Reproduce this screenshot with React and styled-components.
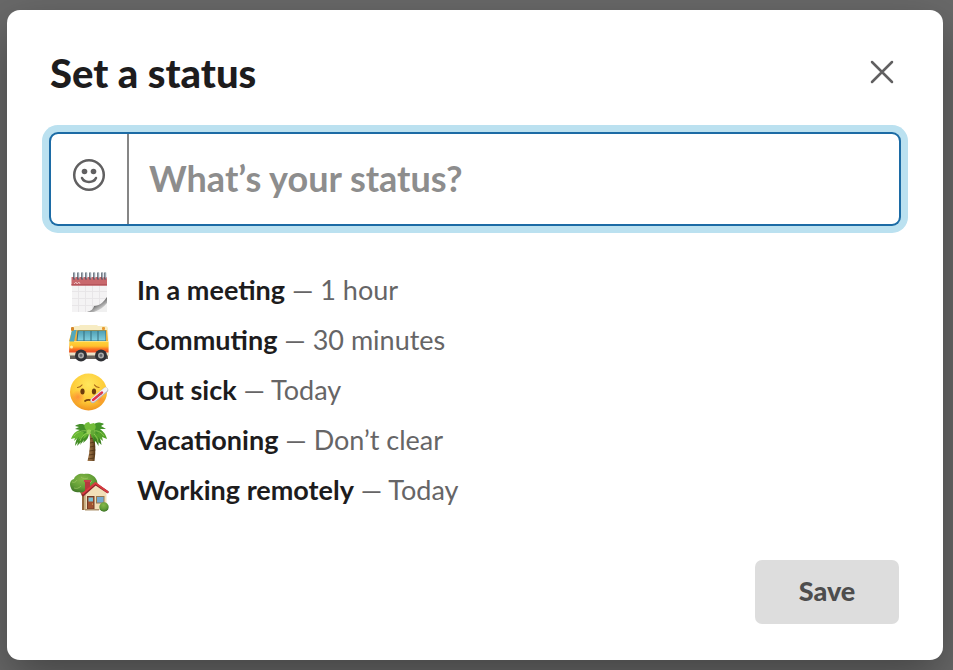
import { useState } from 'react'
import styled, { createGlobalStyle } from 'styled-components'

const GlobalStyle = createGlobalStyle`
  * { box-sizing: border-box; }

  body {
    margin: 0;
    font-family: Lato, 'Liberation Sans', sans-serif;
    color: #1d1c1d;
  }
`

const Overlay = styled.div`
  min-height: 100vh;
  padding: 10px 10px 10px 7px;
  background: #696969;
  overflow: hidden;
`

const Modal = styled.form`
  padding: 39px 44px 36px 43px;
  background: #fff;
  border-radius: 13px;
  box-shadow: 0 18px 48px rgba(0, 0, 0, 0.35);
`

const Header = styled.header`
  display: flex;
  justify-content: space-between;
  align-items: flex-start;
  margin-bottom: 37px;
`

const Title = styled.h1`
  margin: 0;
  font-size: 40px;
  line-height: 48px;
  font-weight: 900;
`

const CloseButton = styled.button`
  display: flex;
  padding: 8px 4px;
  border: none;
  background: none;
  color: #616061;
  cursor: pointer;
`

const StatusField = styled.div`
  display: flex;
  height: 90px;
  margin-left: 1px;
  border-radius: 7px;
  box-shadow: 0 0 0 2px #1c6ba5, 0 0 0 9px #bbe1f0;
`

const EmojiButton = styled.button`
  display: flex;
  align-items: center;
  justify-content: center;
  width: 78px;
  padding: 0 0 8px;
  border: none;
  border-right: 2px solid #868686;
  background: none;
  color: #616061;
  cursor: pointer;
`

const StatusInput = styled.input`
  flex: 1;
  min-width: 0;
  padding: 0 20px 2px;
  border: none;
  outline: none;
  background: none;
  color: inherit;
  font-family: inherit;
  font-size: 36px;
  font-weight: 700;

  &::placeholder {
    color: #8d8d8d;
    opacity: 1;
  }
`

const PresetList = styled.ul`
  margin: 0;
  padding: 43px 0 0 1px;
  list-style: none;
`

const Preset = styled.button`
  display: flex;
  align-items: center;
  gap: 28px;
  width: 100%;
  height: 50px;
  padding: 0 18px;
  border: none;
  background: none;
  color: #666566;
  font-family: inherit;
  font-size: 27px;
  line-height: 32px;
  text-align: left;
  cursor: pointer;

  svg {
    flex: none;
    overflow: visible;
  }
`

const PresetText = styled.span`
  padding-bottom: 4px;
`

const PresetName = styled.b`
  color: #1d1c1d;
  font-weight: 700;
`

const Footer = styled.footer`
  display: flex;
  justify-content: flex-end;
  margin-top: 43px;
`

const SaveButton = styled.button`
  width: 144px;
  height: 64px;
  padding: 0 0 4px;
  border: none;
  border-radius: 7px;
  background: #ddd;
  color: #4d4d4d;
  font-family: inherit;
  font-size: 27px;
  font-weight: 900;
`

const CloseIcon = () => (
  <svg width="26" height="30" viewBox="0 0 26 30" fill="none" stroke="currentColor" strokeWidth="2.5" strokeLinecap="round">
    <path d="M3 5l20 20M23 5L3 25" />
  </svg>
)

const SmileIcon = () => (
  <svg width="34" height="34" viewBox="0 0 34 34" fill="none" stroke="currentColor" strokeWidth="2.5" strokeLinecap="round">
    <circle cx="17" cy="17" r="14.8" />
    <path d="M10 20c2.2 5.2 11.8 5.2 14 0" />
    <circle cx="12.5" cy="13.5" r="2.8" fill="currentColor" stroke="none" />
    <circle cx="21.5" cy="13.5" r="2.8" fill="currentColor" stroke="none" />
  </svg>
)

const CalendarIcon = () => (
  <svg width="40" height="40" viewBox="0 0 40 40" aria-hidden="true">
    <defs>
      <linearGradient id="curl" x1="0.2" y1="0.2" x2="0.8" y2="0.9">
        <stop offset="0" stopColor="#e4e4e4" />
        <stop offset="0.3" stopColor="#444" />
        <stop offset="0.6" stopColor="#999" />
        <stop offset="1" stopColor="#f2f2f2" />
      </linearGradient>
    </defs>
    <path d="M3 12h35v28H3z" fill="#f4f3f4" />
    <path d="M3 19.5h35M3 26.5h35M3 33.5h35M9.5 13v27M16.5 13v27M23.5 13v27M30.5 13v27" stroke="#e6e4e6" strokeWidth="0.9" />
    <path d="M2.5 5H38v8.500H2.500z" fill="#c9686d" />
    <path d="M2.500 12H38v1.500H2.500z" fill="#b6545b" />
    <path d="M5 12l2-2 1 2 2-2 1 2" stroke="#e9b9bb" fill="none" />
    <path d="M18 40c4-1 6-2.500 7-6 6-.5 9-3 13-9V40z" fill="url(#curl)" />
    <path d="M25 40c6-2 10-5 13-9v9z" fill="#f0f0f0" />
    {[5, 9, 13, 17, 21, 25, 29, 33, 36].map((x) => (
      <g key={x} strokeLinecap="round">
        <path d={`M${x} 1v6`} stroke="#485360" strokeWidth="1.5" />
        <path d={`M${x + 1} 1v5`} stroke="#c9d5df" strokeWidth="1" />
      </g>
    ))}
  </svg>
)

const BusIcon = () => (
  <svg width="40" height="40" viewBox="0 0 40 40" aria-hidden="true">
    <defs>
      <linearGradient id="busBody" x1="0" y1="0" x2="0" y2="1">
        <stop offset="0" stopColor="#ffd43b" />
        <stop offset="0.3" stopColor="#ffc02e" />
        <stop offset="0.5" stopColor="#fa6e23" />
        <stop offset="0.68" stopColor="#e94b25" />
        <stop offset="0.74" stopColor="#f3ead0" />
        <stop offset="1" stopColor="#d8ceb5" />
      </linearGradient>
      <linearGradient id="glass" x1="0" y1="0" x2="0" y2="1">
        <stop offset="0" stopColor="#4f9fb4" />
        <stop offset="1" stopColor="#83d0df" />
      </linearGradient>
    </defs>
    <path d="M4 6q0-2 3-2h3l1-1h17l1 1h7q3 0 3 3l1 25q0 3-3 3H3q-3 0-3-3V20z" fill="#f7ecc3" />
    <path d="M3 8h35l1 11H0z" fill="#efb03a" />
    <path d="M3 8h4.500L5 20H.5z" fill="#54a8ba" />
    <path d="M8.500 8.500H37V19H7.500z" fill="#356d7c" />
    <path d="M9.500 9h5v9.500H8.500zM15.500 9h6v9.500h-6zM22.500 9h6v9.500h-6zM29.500 9h7v9.500h-7z" fill="url(#glass)" />
    <path d="M.5 19.500H39.500V32q0 3-3 3H3q-3 0-3-3z" fill="url(#busBody)" />
    <circle cx="2.500" cy="25" r="1.500" fill="#fff3aa" />
    <rect x="2" y="5" width="3" height="4" rx="1" fill="#d48628" />
    <rect x="33" y="5" width="3" height="3" rx="1" fill="#e79a2f" />
    <path d="M1 33.500h38v3.500H1z" fill="#67615a" />
    {[12, 32].map((x) => (
      <g key={x}>
        <circle cx={x} cy="33.500" r="6" fill="#303135" />
        <circle cx={x} cy="33.500" r="3" fill="#aaa9a7" />
        <circle cx={x} cy="33.500" r="1.400" fill="#63656a" />
      </g>
    ))}
  </svg>
)

const SickIcon = () => (
  <svg width="40" height="40" viewBox="0 0 40 40" aria-hidden="true">
    <defs>
      <radialGradient id="face" cx="0.5" cy="0.3" r="0.7">
        <stop offset="0" stopColor="#ffe75c" />
        <stop offset="0.65" stopColor="#fecb38" />
        <stop offset="1" stopColor="#f0931e" />
      </radialGradient>
      <radialGradient id="cheek">
        <stop offset="0" stopColor="#ff7335" stopOpacity="0.65" />
        <stop offset="1" stopColor="#ff7335" stopOpacity="0" />
      </radialGradient>
    </defs>
    <circle cx="19.500" cy="20" r="18.500" fill="url(#face)" />
    <circle cx="9" cy="25" r="7" fill="url(#cheek)" />
    <circle cx="31" cy="27" r="5" fill="url(#cheek)" />
    <ellipse cx="13.500" cy="19.500" rx="2.100" ry="3" fill="#6b3c0d" />
    <ellipse cx="25" cy="19.500" rx="2.100" ry="3" fill="#6b3c0d" />
    <path d="M8.500 15.500c2-.2 3.500-1.200 4.500-2.500M25.500 13c1 1.500 2.500 2.300 4.500 2.500" fill="none" stroke="#a8651a" strokeWidth="1.200" strokeLinecap="round" />
    <path d="M16 29c2-1.500 5-1.500 8 0" fill="none" stroke="#76410f" strokeWidth="1.700" strokeLinecap="round" />
    <path d="M24 28.500L36.500 18" stroke="#b7b8bd" strokeWidth="5.400" strokeLinecap="round" />
    <path d="M24 28L36.500 17.500" stroke="#f4f3f5" strokeWidth="4.200" strokeLinecap="round" />
    <path d="M24 28L33 20.500" stroke="#e5304a" strokeWidth="2.400" strokeLinecap="round" />
    <path d="M28 23l1.500 2M31 20.500l1.500 2" stroke="#7d767c" strokeWidth="0.700" />
  </svg>
)

const PalmIcon = () => (
  <svg width="40" height="40" viewBox="0 0 40 40" aria-hidden="true">
    <defs>
      <linearGradient id="trunk">
        <stop offset="0" stopColor="#a77b4b" />
        <stop offset="0.5" stopColor="#866039" />
        <stop offset="1" stopColor="#533516" />
      </linearGradient>
    </defs>
    <path d="M20.500 11h4c2 9 2.500 18 1 28h-7c2.500-9 3-19 2-28z" fill="url(#trunk)" />
    <path d="M21 17l4-1M21 21l5-1M21 25l5-1M20.500 29l6-1M20 33l6-1M19 37l6-1" stroke="#4f3318" strokeWidth="0.800" />
    <path d="M20 11C13 10 7 14 6 24l3-4-1 4 4-4-1 3 4-5-1 3c4-3 6-6 6-10z" fill="#438e25" />
    <path d="M23 10c5 1 9 5 9.500 13l-3-3v4l-3-5-1 2c-2-4-3-7-2.500-11z" fill="#3d8121" />
    <path d="M20 9C14 5 5 8 2 17l4-1-1 3 5-4-1 3 6-4-1 3c4-2 6-5 6-8z" fill="#67b733" />
    <path d="M23 8c7-3 13 1 15 9l-5-2 1 4-5-4 1 3-6-4 1 3c-3-2-5-6-2-9z" fill="#55a32b" />
    <path d="M20 10C19 2 12 0 6 4l4 1-4 2 5 1-2 2h6l-1 2 6-2z" fill="#438e28" />
    <path d="M22 10c0-8 6-12 13-8l-3 2 5 3h-6l3 3-6-1 1 3z" fill="#449529" />
    <path d="M19 10C14 5 14 1 20 0l1 2 4-1c3 3 2 7-2 9z" fill="#73bd3a" />
    <circle cx="20" cy="10" r="2.500" fill="#9dd35b" />
    <circle cx="24" cy="10.500" r="2.500" fill="#65a936" />
    <path d="M18 9C13 8 8 10 5 14M25 9c4-1 8 2 10 5M18 11c-4 2-6 5-7 8M25 12c2 2 4 5 4 8" fill="none" stroke="#9bd15a" strokeWidth="0.800" />
  </svg>
)

const HouseIcon = () => (
  <svg width="40" height="40" viewBox="0 0 40 40" aria-hidden="true">
    <defs>
      <radialGradient id="leaf" cx="0.45" cy="0.3" r="0.7">
        <stop offset="0" stopColor="#87b849" />
        <stop offset="0.6" stopColor="#629e36" />
        <stop offset="1" stopColor="#3e7428" />
      </radialGradient>
    </defs>
    <path d="M10 18h6v20h-3V24z" fill="#95693d" />
    <path d="M2 16C0 12 1 8 5 7c1-4 6-6 10-5 5-1 10 1 12 5 3 4 1 11-4 12-4 3-7 2-10 1-5 1-10 0-11-4z" fill="url(#leaf)" />
    <path d="M3 10c2 1 4 0 5-2M12 5c2 2 5 2 7 1M5 16c3 1 5 0 7-2M20 12l3-3" fill="none" stroke="#a0c764" strokeWidth="0.700" />
    <path d="M16 9h5v10h-5z" fill="#b8363e" />
    <path d="M15 8h7v2h-7z" fill="#c74249" />
    <path d="M15.500 21L27 12l10.500 9v17h-22z" fill="#f2dfb8" />
    <path d="M15.500 23v15h1.500V22z" fill="#cdb78e" />
    <path d="M14 23l12.500-11L38.500 20" fill="none" stroke="#8e2229" strokeWidth="2.500" strokeLinecap="round" strokeLinejoin="round" />
    <path d="M14 21.500L26.500 11l12 9" fill="none" stroke="#d93b40" strokeWidth="1.800" strokeLinecap="round" strokeLinejoin="round" />
    <path d="M18 24h7.500v13.500H18z" fill="#743b26" />
    <path d="M19 25h5.500v11.500H19z" fill="#a0522f" />
    <path d="M19.500 25.500h4.500v4h-4.500z" fill="#78c0d5" />
    <circle cx="23.500" cy="32" r="0.600" fill="#f4d574" />
    <path d="M27 24h8.500v7.500H27z" fill="#967950" />
    <path d="M28 25h6.500v5.500H28z" fill="#75a9d0" />
    <path d="M16 37h14v1.500H16z" fill="#ad926c" />
    <circle cx="35" cy="35" r="4.700" fill="url(#leaf)" />
  </svg>
)

const PRESETS = [
  { name: 'In a meeting', duration: '1 hour', Icon: CalendarIcon },
  { name: 'Commuting', duration: '30 minutes', Icon: BusIcon },
  { name: 'Out sick', duration: 'Today', Icon: SickIcon },
  { name: 'Vacationing', duration: 'Don’t clear', Icon: PalmIcon },
  { name: 'Working remotely', duration: 'Today', Icon: HouseIcon },
]

const App = () => {
  const [status, setStatus] = useState('')

  return (
    <>
      <GlobalStyle />
      <Overlay>
        <Modal role="dialog" aria-labelledby="status-title" onSubmit={(e) => e.preventDefault()}>
          <Header>
            <Title id="status-title">Set a status</Title>
            <CloseButton type="button" aria-label="Close">
              <CloseIcon />
            </CloseButton>
          </Header>
          <StatusField>
            <EmojiButton type="button" aria-label="Choose an emoji">
              <SmileIcon />
            </EmojiButton>
            <StatusInput
              type="text"
              placeholder="What’s your status?"
              aria-label="Status"
              value={status}
              onChange={(e) => setStatus(e.target.value)}
            />
          </StatusField>
          <PresetList>
            {PRESETS.map(({ name, duration, Icon }) => (
              <li key={name}>
                <Preset type="button" onClick={() => setStatus(name)}>
                  <Icon />
                  <PresetText>
                    <PresetName>{name}</PresetName> — {duration}
                  </PresetText>
                </Preset>
              </li>
            ))}
          </PresetList>
          <Footer>
            <SaveButton type="submit" disabled={!status.trim()}>Save</SaveButton>
          </Footer>
        </Modal>
      </Overlay>
    </>
  )
}

export default App
